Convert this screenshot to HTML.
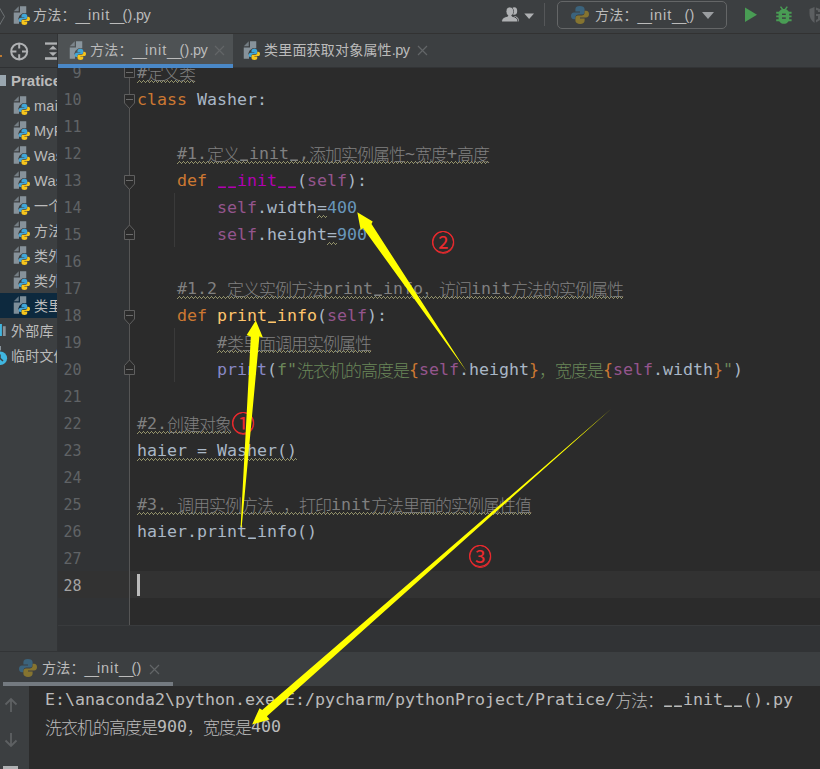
<!DOCTYPE html>
<html lang="zh-CN">
<head>
<meta charset="utf-8">
<title>方法: __init__().py</title>
<style>
*{box-sizing:border-box;margin:0;padding:0}
html,body{width:820px;height:769px;overflow:hidden;background:#2b2b2b}
body{position:relative;font-family:"Liberation Sans","Noto Sans CJK SC",sans-serif;font-size:15px;color:#bbbbbb}
.abs{position:absolute}
svg{position:absolute;overflow:visible}
svg svg{position:static;overflow:hidden}
/* top nav bar */
#nav{left:0;top:0;width:820px;height:33px;background:#3c3f41}
#navline{left:0;top:33px;width:820px;height:1px;background:#323232}
.ui{position:absolute;white-space:pre;line-height:20px;color:#bbbbbb;font-size:14.500px;letter-spacing:.25px}
.ui i{font-style:normal;font-size:14px;letter-spacing:.2px}
/* left project panel */
#left{left:0;top:34px;width:57px;height:618px;background:#3c3f41;overflow:hidden}
#ldiv{left:57px;top:34px;width:1px;height:618px;background:#323436}
#lline{left:0;top:67px;width:57px;height:1px;background:#2f3133}
.row{position:absolute;left:0;width:58px;height:25px}
.row .ui{left:34px;top:3px}
.row.sel{background:#0d293e}
/* tab bar */
#tabs{left:58px;top:34px;width:762px;height:34px;background:#3c3f41}
#tline{left:58px;top:67px;width:762px;height:1px;background:#323436}
#tab1{left:58px;top:34px;width:175px;height:30px;background:#4e5254}
#tab1u{left:58px;top:64px;width:175px;height:4px;background:#4a88c7}
/* editor */
#gutter{left:58px;top:68px;width:71px;height:557px;background:#313335}
#editor{left:130px;top:68px;width:690px;height:557px;background:#2b2b2b}
#cur{left:58px;top:571px;width:762px;height:27px;background:#323232}
#clip{left:0;top:68px;width:820px;height:557px;overflow:hidden}
#caret{left:137px;top:506px;width:3px;height:22px;background:#bbbbbb}
#hbar{left:58px;top:625px;width:762px;height:27px;background:#313335;border-top:1px solid #393b3d}
#bline{left:0;top:651px;width:58px;height:1px;background:#323436}
.ln{position:absolute;left:58px;width:23.500px;text-align:right;font:15px/27px "DejaVu Sans Mono","Liberation Mono",monospace;color:#606366;height:27px;white-space:pre}
.cl{position:absolute;left:137px;height:27px;font:16.61px/27px "DejaVu Sans Mono","Liberation Mono","Noto Sans CJK SC",monospace;color:#a9b7c6;white-space:pre}
.cl i,.con i{font-style:normal;font-family:"Liberation Sans","Noto Sans CJK SC",sans-serif;font-size:17px;letter-spacing:-1px;font-weight:300;display:inline-block;line-height:27px;vertical-align:top;position:relative;top:2px}
.ln.cur{color:#a4a3a3}
.k{color:#cc7832}.s{color:#94558d}.n{color:#6897bb}.g{color:#6a8759}.c{color:#808080}.m{color:#b200b2}.b{color:#8888c6}
.f{color:#ffc66d}
.cl u,.con u{text-decoration:none;position:relative;top:-2px;font-weight:bold;display:inline-block;transform:scaleX(.8)}
.u{letter-spacing:-1.900px;position:relative;top:1px}
.ui b{font-weight:normal;letter-spacing:.9px}
.ui s{text-decoration:none;letter-spacing:-.6px}
/* bottom */
#bhead{left:0;top:652px;width:820px;height:34px;background:#3c3f41}
#bund{left:3px;top:682px;width:170px;height:4px;background:#747a80}
#bleft{left:0;top:686px;width:29px;height:83px;background:#3c3f41}
#console{left:29px;top:686px;width:791px;height:83px;background:#2b2b2b}
.con{position:absolute;left:45px;height:27px;font:16.61px/27px "DejaVu Sans Mono","Liberation Mono","Noto Sans CJK SC",monospace;color:#bbbbbb;white-space:pre}
.con i{font-weight:300}
.red::after{content:"";box-sizing:border-box;position:absolute;left:.8px;top:1.900px;width:22.200px;height:22.400px;border:1.600px solid #ec2a2e;border-radius:50%}
.red{position:absolute;color:#ec2a2e;font:400 23px/28px "Liberation Sans","Noto Sans CJK SC",sans-serif;width:24px;height:24px;text-align:center}
</style>
</head>
<body>
<svg width="0" height="0" style="display:none">
<defs>
<path id="snake" d="M4.4 0 C3 0 2.2 .6 2.2 1.6 V2.8 H4.5 V3.2 H1.5 C.5 3.2 0 4 0 4.9 C0 5.9 .5 6.6 1.5 6.6 H2.2 V5.600 C2.2 4.800 2.900 4.200 3.700 4.200 H5.600 C6.300 4.200 6.800 3.700 6.800 3 V1.600 C6.800 .6 5.800 0 4.400 0 Z"/>
<g id="pyfile">
<path d="M7 1 L3 5 H7 Z" fill="#9aa7b0" fill-opacity=".6"/>
<path d="M8 1 V6 H3 V15 H7.200 V12 L6.600 11 L7.500 8.500 L10 6.500 H13 V1 Z" fill="#9aa7b0" fill-opacity=".8"/>
<g transform="translate(7 7)"><use href="#snake" fill="#40a6d8"/><use href="#snake" fill="#f6c51c" transform="rotate(180 4.500 4.500)"/></g>
</g>
<g id="py">
<g transform="scale(2)"><use href="#snake" fill="#3b637c"/><use href="#snake" fill="#857430" transform="rotate(180 4.500 4.500)"/></g>
</g>
</defs>
</svg>

<!-- NAV BAR -->
<div id="nav" class="abs"></div>
<div id="navline" class="abs"></div>
<svg style="left:0;top:6px" width="8" height="22" viewBox="0 0 8 22"><path d="M-1 1 L4.500 10.500 L-1 20" fill="none" stroke="#6e7275" stroke-width="1"/></svg>
<svg style="left:10px;top:5px" width="20" height="20" viewBox="0 0 16 16"><use href="#pyfile"/></svg>
<div class="ui" style="left:33px;top:5px"><i>方法：</i><span class="u">__</span><b>init</b><span class="u">__</span>()<s>.py</s></div>

<svg style="left:500px;top:0" width="50" height="34" viewBox="0 0 50 34">
<ellipse cx="14.300" cy="11" rx="2.900" ry="3.800" fill="#afb1b3"/><path d="M9 21.500 C9 17.500 11 16.300 14.300 16 C17 16.500 19 18 19 21.500 Z" fill="#afb1b3"/>
<ellipse cx="9.800" cy="11.400" rx="3.500" ry="4.200" fill="#afb1b3" stroke="#3c3f41" stroke-width="1"/><path d="M1.500 22 C1.500 18.500 3.500 17 7.500 16.200 L8 14.500 H11.600 L12.100 16.200 C16 17 18 18.500 18 22 Z" fill="#afb1b3" stroke="#3c3f41" stroke-width="1"/>
<ellipse cx="9.800" cy="11.400" rx="3.300" ry="4" fill="#afb1b3"/>
<path d="M24.300 13.400 H34 L29.150 18.900 Z" fill="#afb1b3"/>
<rect x="44" y="3" width="1" height="23" fill="#555759"/>
</svg>
<div class="abs" style="left:557px;top:1px;width:170px;height:28px;border:1px solid #646667;border-radius:5px;background:#3c3f41"></div>
<svg style="left:571px;top:6px" width="18" height="18" viewBox="0 0 18 18"><use href="#py"/></svg>
<div class="ui" style="left:595px;top:5px"><i>方法：</i><span class="u">__</span><b>init</b><span class="u">__</span>()</div>
<svg style="left:702px;top:12px" width="13" height="8" viewBox="0 0 13 8"><path d="M0 0 H12 L6 7 Z" fill="#9a9da0"/></svg>
<svg style="left:744px;top:7px" width="14" height="16" viewBox="0 0 14 16"><path d="M1 0.500 L13 7.800 L1 15 Z" fill="#499c54"/></svg>
<svg style="left:775px;top:6px" width="18" height="18" viewBox="0 0 18 18">
<path d="M5.500 .6 L8 3.900 M12.300 .6 L9.800 3.900" stroke="#499c54" stroke-width="1.500" fill="none"/>
<path d="M1.200 6.800 H16.600 M1.200 10.400 H16.600 M1.200 14.200 H16.600" stroke="#499c54" stroke-width="1.900" fill="none"/>
<path d="M8.900 3 C12 3 14.200 5 14.200 8 V12.500 C14.200 15.500 12 17.800 8.900 17.800 S3.600 15.500 3.600 12.500 V8 C3.600 5 5.800 3 8.900 3 Z" fill="#499c54"/>
<rect x="7" y="7.600" width="3.800" height="1.400" fill="#3c3f41"/><rect x="7" y="11.400" width="3.800" height="1.400" fill="#3c3f41"/>
</svg>
<svg style="left:809px;top:7px" width="11" height="17" viewBox="0 0 11 17"><path d="M.5 2 L5.500 0 V16 C2 13.500 .5 10.500 .5 6.500 Z" fill="#5c5f61"/><path d="M7 .5 L11 2 V5 H9 V3.500 L7 3 Z M7 7 H11 V13 L7 15.500 V13 L9 12 V9 H7 Z" fill="#5c5f61"/></svg>

<!-- LEFT PANEL -->
<div id="left" class="abs">
<svg style="left:0;top:20px" width="3" height="4"><rect x="0" y="1" width="2" height="2" fill="#c07a30"/></svg>
<svg style="left:9px;top:7px" width="20" height="20" viewBox="0 0 20 20"><circle cx="10.200" cy="10.400" r="8" fill="none" stroke="#afb1b3" stroke-width="2"/><path d="M10.200 2.400 v5.200 M10.200 13.200 v5.200 M2.200 10.400 h5.200 M13 10.400 h5.200" stroke="#afb1b3" stroke-width="2"/></svg>
<svg style="left:45px;top:8px" width="14" height="18" viewBox="0 0 14 18"><rect x="0" y=".4" width="14" height="2.300" fill="#afb1b3"/><rect x="0" y="15.200" width="14" height="2.600" fill="#afb1b3"/><path d="M4 7.600 L8 3.800 L12 7.600 Z M4 10.200 L8 14 L12 10.200 Z" fill="#afb1b3"/></svg>
<div class="row" style="top:34px"><svg style="left:0;top:5px" width="6" height="14"><rect x="0" y="2" width="6" height="11" fill="#9aa7b0"/></svg><div class="ui" style="left:11px;font-weight:bold;letter-spacing:0;font-size:15px">Pratice</div></div>
<div class="row" style="top:59px"><svg style="left:10px;top:2px" width="20" height="20" viewBox="0 0 16 16"><use href="#pyfile"/></svg><div class="ui">main.py</div></div>
<div class="row" style="top:84px"><svg style="left:10px;top:2px" width="20" height="20" viewBox="0 0 16 16"><use href="#pyfile"/></svg><div class="ui">MyP</div></div>
<div class="row" style="top:109px"><svg style="left:10px;top:2px" width="20" height="20" viewBox="0 0 16 16"><use href="#pyfile"/></svg><div class="ui">Wash</div></div>
<div class="row" style="top:134px"><svg style="left:10px;top:2px" width="20" height="20" viewBox="0 0 16 16"><use href="#pyfile"/></svg><div class="ui">Wash</div></div>
<div class="row" style="top:159px"><svg style="left:10px;top:2px" width="20" height="20" viewBox="0 0 16 16"><use href="#pyfile"/></svg><div class="ui"><i>一个</i></div></div>
<div class="row" style="top:184px"><svg style="left:10px;top:2px" width="20" height="20" viewBox="0 0 16 16"><use href="#pyfile"/></svg><div class="ui"><i>方法</i></div></div>
<div class="row" style="top:209px"><svg style="left:10px;top:2px" width="20" height="20" viewBox="0 0 16 16"><use href="#pyfile"/></svg><div class="ui"><i>类外</i></div></div>
<div class="row" style="top:234px"><svg style="left:10px;top:2px" width="20" height="20" viewBox="0 0 16 16"><use href="#pyfile"/></svg><div class="ui"><i>类外</i></div></div>
<div class="row sel" style="top:259px"><svg style="left:10px;top:2px" width="20" height="20" viewBox="0 0 16 16"><use href="#pyfile"/></svg><div class="ui"><i>类里</i></div></div>
<div class="row" style="top:284px"><svg style="left:0;top:5px" width="6" height="14"><rect x="0" y="1" width="1.900" height="12" fill="#40b6e0"/><rect x="2.900" y="3.200" width="2.800" height="9.800" fill="#9aa7b0" fill-opacity=".8"/></svg><div class="ui" style="left:11px"><i>外部库</i></div></div>
<div class="row" style="top:309px"><svg style="left:0;top:5px" width="8" height="18"><rect x="0" y="-2" width="1" height="4.400" fill="#9aa7b0" fill-opacity=".8"/><circle cx=".3" cy="10.200" r="6.800" fill="#40b6e0"/><path d="M0 6.500 V10.200 L3 13" stroke="#3c3f41" stroke-width="1.500" fill="none"/></svg><div class="ui" style="left:11px"><i>临时文件</i></div></div>
</div>

<div id="ldiv" class="abs"></div>
<div id="lline" class="abs"></div>
<!-- TABS -->
<div id="tabs" class="abs"></div>
<div id="tline" class="abs"></div>
<div id="tab1" class="abs"></div>
<div id="tab1u" class="abs"></div>
<svg style="left:66px;top:40px" width="20" height="20" viewBox="0 0 16 16"><use href="#pyfile"/></svg>
<div class="ui" style="left:90px;top:40px"><i>方法：</i><span class="u">__</span><b>init</b><span class="u">__</span>()<s>.py</s></div>
<svg style="left:214px;top:45px" width="11" height="11" viewBox="0 0 11 11"><path d="M1 1 L10 10 M10 1 L1 10" stroke="#626567" stroke-width="1.200"/></svg>
<svg style="left:240px;top:40px" width="20" height="20" viewBox="0 0 16 16"><use href="#pyfile"/></svg>
<div class="ui" style="left:264px;top:40px"><i>类里面获取对象属性</i><s>.py</s></div>
<svg style="left:417px;top:45px" width="11" height="11" viewBox="0 0 11 11"><path d="M1 1 L10 10 M10 1 L1 10" stroke="#626567" stroke-width="1.200"/></svg>

<!-- EDITOR -->
<div id="editor" class="abs"></div>
<div id="gutter" class="abs"></div>
<div id="cur" class="abs"></div>
<div id="hbar" class="abs"></div>
<div id="bline" class="abs"></div>
<div id="clip" class="abs">
<!--ART--><svg id="art" style="left:0;top:-68px" width="820" height="769" viewBox="0 0 820 769">
<rect x="129" y="68" width="1" height="557" fill="#555555"/>
<rect x="174" y="193" width="1" height="54" fill="#3a3a3a"/>
<rect x="174" y="328" width="1" height="54" fill="#3a3a3a"/>
<path d="M124.500 67.5 H134.500 V77.5 H124.500 Z" fill="#2b2b2b" stroke="#5f5f5f"/><rect x="126" y="72" width="7" height="1" fill="#6b6b6b"/>
<path d="M124.500 94.5 H134.500 V103.0 L129.500 108.5 L124.500 103.0 Z" fill="#2b2b2b" stroke="#5f5f5f" stroke-width="1"/><rect x="126" y="99" width="7" height="1" fill="#6b6b6b"/>
<path d="M124.500 175.5 H134.500 V184.0 L129.500 189.5 L124.500 184.0 Z" fill="#2b2b2b" stroke="#5f5f5f" stroke-width="1"/><rect x="126" y="180" width="7" height="1" fill="#6b6b6b"/>
<path d="M124.500 310.5 H134.500 V319.0 L129.500 324.5 L124.500 319.0 Z" fill="#2b2b2b" stroke="#5f5f5f" stroke-width="1"/><rect x="126" y="315" width="7" height="1" fill="#6b6b6b"/>
<path d="M129.500 225 L134.500 230.5 V239.5 H124.500 V230.5 Z" fill="#2b2b2b" stroke="#5f5f5f" stroke-width="1"/><rect x="126" y="234" width="7" height="1" fill="#6b6b6b"/>
<path d="M129.500 360 L134.500 365.5 V374.5 H124.500 V365.5 Z" fill="#2b2b2b" stroke="#5f5f5f" stroke-width="1"/><rect x="126" y="369" width="7" height="1" fill="#6b6b6b"/>
<defs><pattern id="wv" width="4" height="3" patternUnits="userSpaceOnUse"><path d="M0 2h1v1h-1zM1 1h1v1h-1zM2 0h1v1h-1zM3 1h1v1h-1z" fill="#93926a" shape-rendering="crispEdges"/></pattern></defs>
<svg x="137" y="80" width="58" height="3"><rect width="58" height="3" fill="url(#wv)"/></svg>
<svg x="177" y="161" width="312" height="3"><rect width="312" height="3" fill="url(#wv)"/></svg>
<svg x="317" y="215" width="10" height="3"><rect width="10" height="3" fill="url(#wv)"/></svg>
<svg x="327" y="242" width="10" height="3"><rect width="10" height="3" fill="url(#wv)"/></svg>
<svg x="177" y="296" width="446" height="3"><rect width="446" height="3" fill="url(#wv)"/></svg>
<svg x="217" y="350" width="154" height="3"><rect width="154" height="3" fill="url(#wv)"/></svg>
<svg x="137" y="431" width="94" height="3"><rect width="94" height="3" fill="url(#wv)"/></svg>
<svg x="137" y="458" width="160" height="3"><rect width="160" height="3" fill="url(#wv)"/></svg>
<svg x="137" y="512" width="394" height="3"><rect width="394" height="3" fill="url(#wv)"/></svg>
</svg><!--/ART-->
<div id="lines">
<div class="ln" style="top:-8px">9</div>
<div class="cl" style="top:-9px"><span class="c">#<i>定义类</i></span></div>
<div class="ln" style="top:19px">10</div>
<div class="cl" style="top:18px"><span class="k">class </span>Washer:</div>
<div class="ln" style="top:46px">11</div>
<div class="ln" style="top:73px">12</div>
<div class="cl" style="top:72px">    <span class="c">#1.<i>定义</i><u>_</u>init<u>_</u>,<i>添加实例属性</i>~<i>宽度</i>+<i>高度</i></span></div>
<div class="ln" style="top:100px">13</div>
<div class="cl" style="top:99px">    <span class="k">def </span><span class="m"><u>_</u><u>_</u>init<u>_</u><u>_</u></span>(<span class="s">self</span>):</div>
<div class="ln" style="top:127px">14</div>
<div class="cl" style="top:126px">        <span class="s">self</span>.width=<span class="n">400</span></div>
<div class="ln" style="top:154px">15</div>
<div class="cl" style="top:153px">        <span class="s">self</span>.height=<span class="n">900</span></div>
<div class="ln" style="top:181px">16</div>
<div class="ln" style="top:208px">17</div>
<div class="cl" style="top:207px">    <span class="c">#1.2 <i>定义实例方法</i>print<u>_</u>info<i>，访问</i>init<i>方法的实例属性</i></span></div>
<div class="ln" style="top:235px">18</div>
<div class="cl" style="top:234px">    <span class="k">def </span><span class="f">print<u>_</u>info</span>(<span class="s">self</span>):</div>
<div class="ln" style="top:262px">19</div>
<div class="cl" style="top:261px">        <span class="c">#<i>类里面调用实例属性</i></span></div>
<div class="ln" style="top:289px">20</div>
<div class="cl" style="top:288px">        <span class="b">print</span>(<span class="g">f"<i>洗衣机的高度是</i></span><span class="k">{</span><span class="s">self</span>.height<span class="k">}</span><span class="g"><i>，宽度是</i></span><span class="k">{</span><span class="s">self</span>.width<span class="k">}</span><span class="g">"</span>)</div>
<div class="ln" style="top:316px">21</div>
<div class="ln" style="top:343px">22</div>
<div class="cl" style="top:342px"><span class="c">#2.<i>创建对象</i></span></div>
<div class="ln" style="top:370px">23</div>
<div class="cl" style="top:369px">haier = Washer()</div>
<div class="ln" style="top:397px">24</div>
<div class="ln" style="top:424px">25</div>
<div class="cl" style="top:423px"><span class="c">#3. <i>调用实例方法</i> <i>，打印</i>init<i>方法里面的实例属性值</i></span></div>
<div class="ln" style="top:451px">26</div>
<div class="cl" style="top:450px">haier.print<u>_</u>info()</div>
<div class="ln" style="top:478px">27</div>
<div class="ln cur" style="top:505px">28</div>
</div>
<div id="caret" class="abs"></div>
</div>

<!-- BOTTOM -->
<div id="bhead" class="abs"></div>
<div id="bund" class="abs"></div>
<svg style="left:19px;top:659px" width="18" height="18" viewBox="0 0 18 18"><use href="#py"/></svg>
<div class="ui" style="left:42px;top:658px"><i>方法：</i><span class="u">__</span><b>init</b><span class="u">__</span>()</div>
<svg style="left:149px;top:664px" width="11" height="11" viewBox="0 0 11 11"><path d="M1 1 L10 10 M10 1 L1 10" stroke="#626567" stroke-width="1.200"/></svg>
<div id="console" class="abs"></div>
<div id="bleft" class="abs"></div>
<svg style="left:4px;top:697px" width="14" height="16" viewBox="0 0 14 16"><path d="M7 15 V2 M1.500 7.500 L7 2 L12.500 7.500" fill="none" stroke="#5e6163" stroke-width="1.800"/></svg>
<svg style="left:4px;top:732px" width="14" height="16" viewBox="0 0 14 16"><path d="M7 1 V14 M1.500 8.500 L7 14 L12.500 8.500" fill="none" stroke="#5e6163" stroke-width="1.800"/></svg>
<div class="abs" style="left:3px;top:766px;width:15px;height:3px;background:#afb1b3"></div>
<div class="con" style="top:686px">E:\anaconda2\python.exe E:/pycharm/pythonProject/Pratice/<i>方法：</i><u>_</u><u>_</u>init<u>_</u><u>_</u>().py</div>
<div class="con" style="top:713px"><i>洗衣机的高度是</i>900<i>，宽度是</i>400</div>

<!-- ANNOTATIONS -->
<div class="red" style="left:231px;top:410px">①</div>
<div class="red" style="left:431px;top:229px">②</div>
<div class="red" style="left:468px;top:543px">③</div>
<svg style="left:0;top:0" width="820" height="769" viewBox="0 0 820 769">
<polygon points="255.800,320.500 262.900,337.600 259.400,336.400 241.700,527 240.600,527 250.800,336.800 246.700,335" fill="#ffff00"/>
<polygon points="357.300,212.200 372.700,221.600 371.500,224 466.700,371.500 363,228 360.700,230" fill="#ffff00"/>
<polygon points="252.100,724.500 259.500,708.300 262.200,710 611,409 266.900,716.300 269.600,719.400" fill="#ffff00"/>
</svg>
</body>
</html>
